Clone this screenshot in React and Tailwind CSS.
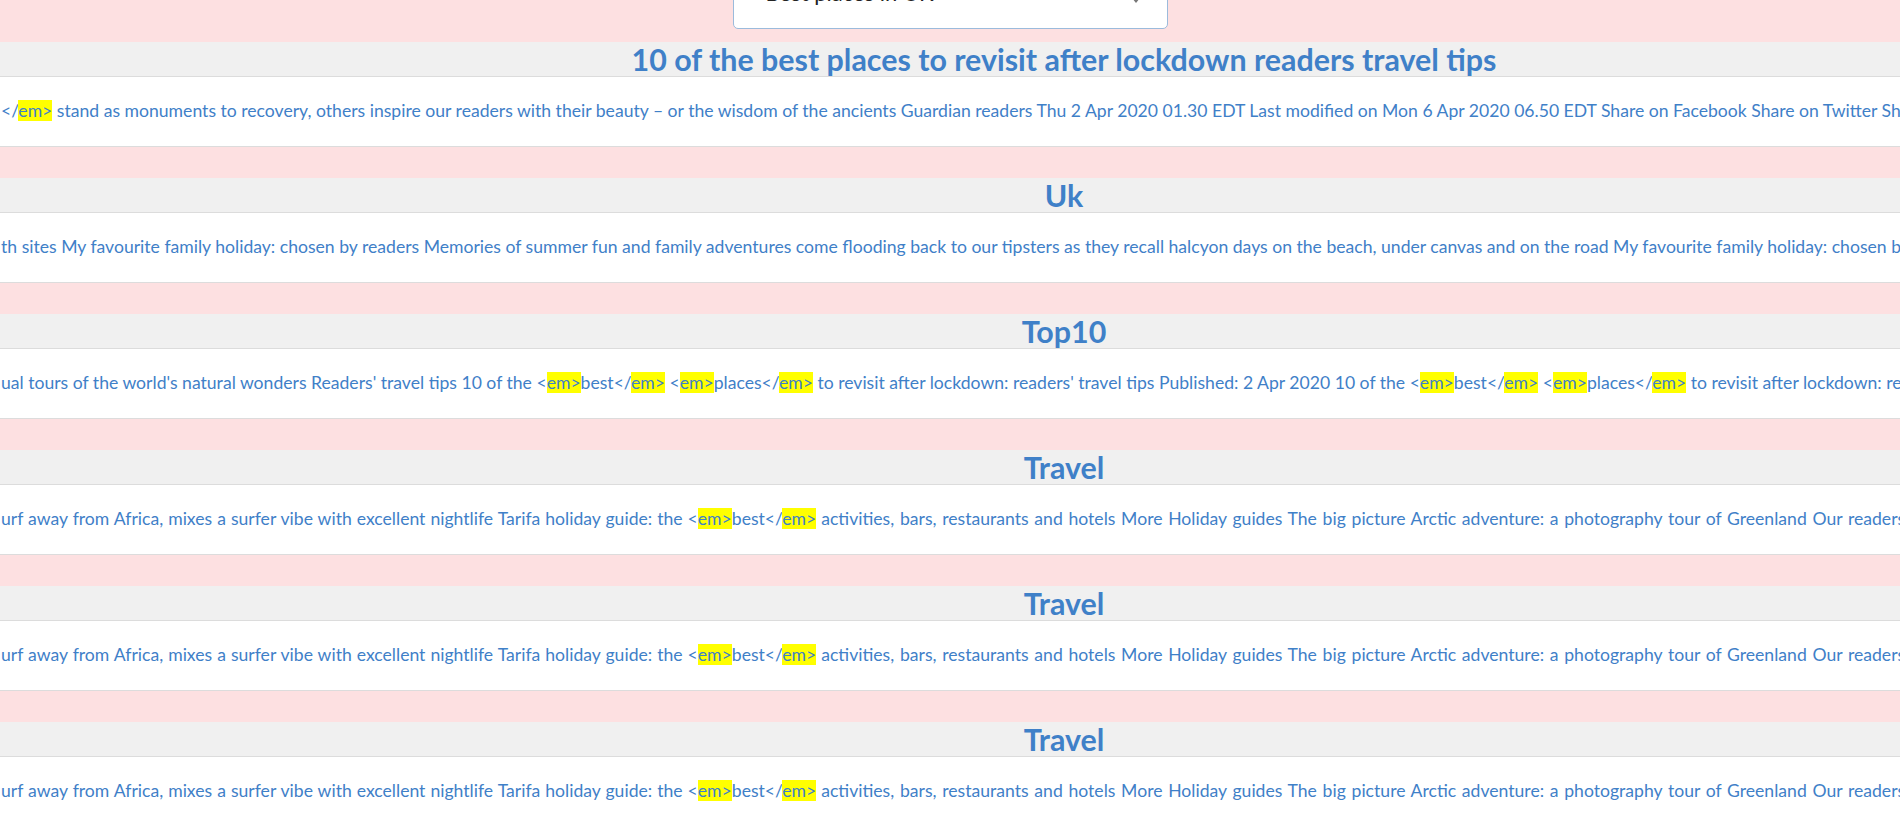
const TRAVEL_HEAD = "urf away from Africa, mixes a surfer vibe with excellent nightlife Tarifa holiday guide: the <em>best</em> "
const TRAVEL_TAIL = "activities, bars, restaurants and hotels More Holiday guides The big picture Arctic adventure: a photography tour of Greenland Our readers’ travel tips"

const ROWS = [
  {
    title: '10 of the best places to revisit after lockdown readers travel tips',
    text: "</em> stand as monuments to recovery, others inspire our readers with their beauty – or the wisdom of the ancients Guardian readers Thu 2 Apr 2020 01.30 EDT Last modified on Mon 6 Apr 2020 06.50 EDT Share on Facebook Share on Twitter Share via Email",
  },
  {
    title: 'Uk',
    text: "th sites My favourite family holiday: chosen by readers Memories of summer fun and family adventures come flooding back to our tipsters as they recall halcyon days on the beach, under canvas and on the road My favourite family holiday: chosen by readers",
  },
  {
    title: 'Top10',
    text: "ual tours of the world's natural wonders Readers' travel tips 10 of the <em>best</em> <em>places</em> to revisit after lockdown: readers' travel tips Published: 2 Apr 2020 10 of the <em>best</em> <em>places</em> to revisit after lockdown: readers' travel tips",
  },
  { title: 'Travel', text: TRAVEL_HEAD, tail: TRAVEL_TAIL },
  { title: 'Travel', text: TRAVEL_HEAD, tail: TRAVEL_TAIL },
  { title: 'Travel', text: TRAVEL_HEAD, tail: TRAVEL_TAIL },
]

function Marked({ text }) {
  const parts = text.split('em>')
  return parts.map((p, i) => (
    <span key={i}>
      {p}
      {i < parts.length - 1 && <span className="bg-[#ffff00]">em&gt;</span>}
    </span>
  ))
}

export default function App() {
  return (
    <div className="min-h-screen bg-[#fde0e1] font-['Lato','Open_Sans',sans-serif] text-[#3f80c8] overflow-hidden">
      <div className="h-[42px] flex justify-center">
        <div className="-mt-[31px] w-[435px] h-[60px] bg-white border border-[#9bbbdc] rounded-[5px] flex items-start justify-between pl-[32px] pr-[26px] pt-[9px]">
          <span className="text-[22px] leading-[28px] text-[#222]">Best places in UK</span>
          <svg width="10" height="30" viewBox="0 0 10 30" className="mt-[2px]">
            <path d="M1 9 L5 4 L9 9 Z" fill="#777" />
            <path d="M1 17 L5 22 L9 17 Z" fill="#777" />
          </svg>
        </div>
      </div>
      {ROWS.map((r, i) => (
        <div key={i}>
          <div className="h-[35px] bg-[#f0f0f0] border-b border-[#dcdcdc] flex items-center justify-center pl-[228px]">
            <h2 className="text-[30.4px] font-bold leading-none whitespace-nowrap">{r.title}</h2>
          </div>
          <div className="h-[70px] bg-white border-b border-[#dcdcdc] flex items-center overflow-hidden whitespace-nowrap text-[17.6px] pl-[1px]">
            {r.tail ? (
              <span className="[word-spacing:0.5px]">
                <Marked text={r.text} />
                <span className="[word-spacing:1.2px]">{r.tail}</span>
              </span>
            ) : (
              <span>
                <Marked text={r.text} />
              </span>
            )}
          </div>
          <div className="h-[31px]" />
        </div>
      ))}
    </div>
  )
}
